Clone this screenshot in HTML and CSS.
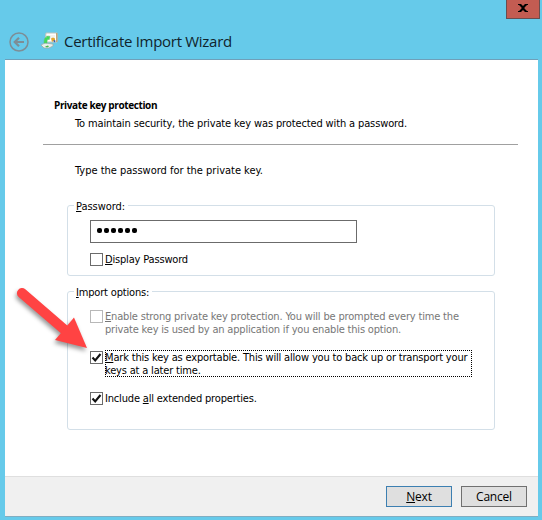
FILE: index.html
```
<!DOCTYPE html>
<html lang="en">
<head>
<meta charset="utf-8">
<title>Certificate Import Wizard</title>
<link rel="stylesheet" href="styles.css">
</head>
<body>
<div class="window">
  <header class="titlebar">
    <svg class="back" width="20" height="20" viewBox="0 0 20 20" fill="none" stroke="#7d8e96"><circle cx="10" cy="10" r="9" stroke-width="1.5"/><path d="M15 10H6M10 5.700L5.700 10l4.300 4.300" stroke-width="2.200"/></svg>
    <svg class="cert" width="17" height="17" viewBox="0 0 17 17"><path d="M5 1h11v9H4z" fill="#fff" stroke="#c3c4bd"/><path d="M15 1h1.500v9H15z" fill="#bda77d"/><path d="M7 3h7v4H7z" fill="#f4f2ed"/><path d="M0 13l4-2 8 1v2l-4 2H3z" fill="#e9efeb" stroke="#9cada8" stroke-width=".8"/><path d="M4 14.500l3-1 1 1-2 1z" fill="#49b64b"/><path d="M3 11c0-4 1-6 3-6L5.500 4 9 4.500 8 8 7.300 7C6 8 6 9 6 11z" fill="#42dc59" stroke="#5dbb70" stroke-width=".5"/><path d="M10 6.500l2-1 2 1v3l-1-1-2 1.500z" fill="#e5a62b"/><path d="M12.500 8l2 .5-.5 2-1.500-1z" fill="#315cae"/></svg>
    <h1>Certificate Import Wizard</h1>
    <button class="close" aria-label="Close"><svg width="10" height="8" viewBox="0 0 10 8"><path d="M0 0h3l2 2 2-2h3v1H9L6.500 3.500v1L9 7h1v1H7L5 6 3 8H0V7h1l2.500-2.500v-1L1 1H0z"/></svg></button>
  </header>
  <main class="page">
    <h2>Private key protection</h2>
    <p class="intro">To maintain security, the private key was protected with a password.</p>
    <hr>
    <p class="prompt">Type the password for the private key.</p>
    <section class="group password">
      <h3><u>P</u>assword:</h3>
      <div class="field"><i></i><i></i><i></i><i></i><i></i><i></i></div>
      <div class="option display"><span class="box"></span><span class="label"><u>D</u>isplay Password</span></div>
    </section>
    <section class="group import">
      <h3><u>I</u>mport options:</h3>
      <div class="option disabled"><span class="box"></span><span class="label"><u>E</u>nable strong private key protection. You will be prompted every time the<br><span class="second">private key is used by an application if you enable this option.</span></span></div>
      <div class="option"><span class="box"><svg width="11" height="11" viewBox="0 0 11 11"><path d="M1.500 5.500l2.700 3L9.500 2" fill="none" stroke="#111" stroke-width="2.100"/></svg></span><span class="label focused"><u>M</u>ark this key as exportable. This will allow you to back up or transport your<br>keys at a later time.</span></div>
      <div class="option extended"><span class="box"><svg width="11" height="11" viewBox="0 0 11 11"><path d="M1.500 5.500l2.700 3L9.500 2" fill="none" stroke="#111" stroke-width="2.100"/></svg></span><span class="label">Include <u>a</u>ll extended properties.</span></div>
    </section>
  </main>
  <footer><button class="next"><span><u>N</u>ext</span></button><button>Cancel</button></footer>
  <svg class="arrow" width="90" height="80" viewBox="0 0 90 80"><path d="M10 10.200L54 48" stroke="#ff4343" stroke-width="10.200" stroke-linecap="round"/><path d="M62 34.500L75 65l-32-8z" fill="#ff4343"/></svg>
</div>
</body>
</html>
```
FILE: styles.css
```
* { box-sizing: border-box; }
body { margin: 0; }
h1, h2, h3, p { margin: 0; font-weight: normal; }
u { text-decoration: underline; text-decoration-thickness: 1px; text-underline-offset: 1px; text-decoration-skip-ink: none; }
.window {
  position: relative;
  display: flex;
  flex-direction: column;
  width: 542px;
  height: 520px;
  padding: 0 4px 3px 5px;
  overflow: hidden;
  background: #66caea;
  color: #000;
  font: 11px/13px "DejaVu Sans Condensed", "DejaVu Sans", sans-serif;
  letter-spacing: -.175px;
}
.titlebar {
  display: flex;
  align-items: flex-start;
  height: 60px;
  padding-left: 4px;
  border-bottom: 1px solid #6f9fb9;
}
.back { margin-top: 32px; }
.cert { margin: 32px 0 0 12px; }
h1 { margin: 31px 0 0 6px; font: 15px/21px "Open Sans", sans-serif; letter-spacing: -.29px; color: #10242c; white-space: nowrap; }
.close {
  display: flex;
  align-items: center;
  justify-content: center;
  width: 34px;
  height: 19px;
  margin: 0 -2px 0 auto;
  padding: 0 0 3px;
  border: 1px solid #684e50;
  border-top: 0;
  background: #c35c52;
}
.page { flex: 1; padding: 38px 20px 0 38px; background: #fff; }
h2 { margin-left: 11px; font: bold 10px/14px "Open Sans", sans-serif; letter-spacing: -.38px; }
.intro { margin: 5px 0 14px 32px; letter-spacing: -.13px; }
hr { height: 1px; margin: 0; border: 0; background: #a0a0a0; }
.prompt { margin: 19px 0 0 32px; letter-spacing: -.01px; }
.group { margin: 0 23px 0 24px; border: 1px solid #d3dfe8; border-radius: 3px; }
.group h3 { width: max-content; margin: -6px 0 0 6px; padding: 0 3px 0 2px; background: #fff; font-size: 11px; }
.password { height: 71px; margin-top: 28px; }
.import { height: 139px; margin-top: 15px; }
.password h3 { letter-spacing: -.05px; }
.field { display: flex; align-items: center; gap: 2px; width: 267px; height: 23px; margin: 7px 0 0 22px; padding: 0 0 2px 6px; border: 1px solid #6b6b6b; }
.field i { width: 5px; height: 5px; border-radius: 2px; background: #000; }
.option { display: flex; align-items: flex-start; margin-left: 22px; }
.display { margin-top: 10px; }
.disabled { margin-top: 11px; color: #777; letter-spacing: -.17px; }
.second { letter-spacing: -.19px; }
.box { flex: none; width: 13px; height: 13px; border: 1px solid #6b6b6b; background: #fff; }
.box svg { display: block; }
.disabled .box { border-color: #b8b8b8; }
.label { margin-left: 2px; white-space: nowrap; }
.disabled + .option { margin-top: 14px; }
.disabled + .option .box { margin-top: 1px; }
.focused { width: 367px; height: 27px; outline: 1px dotted #000; outline-offset: -1px; padding-top: 1px; }
.extended { margin-top: 15px; }
footer { display: flex; justify-content: flex-end; gap: 9px; height: 41px; padding: 9px 11px 0 0; border-top: 1px solid #dfdfdf; border-bottom: 1px solid #81adc1; background: #f0f0f0; }
footer button { width: 66px; height: 21px; padding: 0; border: 1px solid #707070; background: #dfdfdf; color: #000; font: 12px/17px "Open Sans", sans-serif; letter-spacing: -.2px; }
footer .next { border-color: #3c7fb1; }
.arrow { position: absolute; left: 12px; top: 283px; filter: drop-shadow(-1px 3px 2px #0006); pointer-events: none; }
```
